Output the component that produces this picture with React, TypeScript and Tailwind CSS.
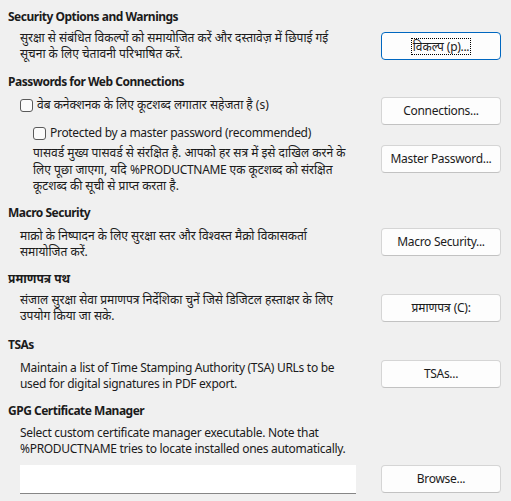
import type { ReactNode } from 'react'

const font = {
  fontFamily:
    '"Noto Sans", "Noto Sans Devanagari", "Open Sans", "Liberation Sans", sans-serif',
}

// Latin runs are tightened a little so they take the width of the original UI font
const latin = 'tracking-[-0.3px]'

function Button({
  children,
  focused = false,
  className = '',
}: {
  children: ReactNode
  focused?: boolean
  className?: string
}) {
  return (
    <button
      className={
        'flex h-[28px] w-[120px] shrink-0 items-center justify-center rounded-[4px] border bg-[#fdfdfd] text-[12px] text-[#1b1b1b] ' +
        (focused
          ? 'border-[#0067c0]'
          : 'border-[#d5d5d5] border-b-[#c2c2c2]') +
        ' ' +
        className
      }
    >
      {focused ? (
        <span className="border border-dotted border-black px-[1px] leading-[15px]">
          {children}
        </span>
      ) : (
        <span>{children}</span>
      )}
    </button>
  )
}

function Heading({ children, className = '' }: { children: ReactNode; className?: string }) {
  return (
    <div
      className={
        'whitespace-nowrap pl-[8px] text-[12px] font-bold leading-[16px] text-[#1b1b1b] ' +
        className
      }
    >
      {children}
    </div>
  )
}

function Checkbox({ label, className = '' }: { label: ReactNode; className?: string }) {
  return (
    <label className={'flex items-center gap-[4px] whitespace-nowrap ' + className}>
      <span className="h-[13px] w-[13px] shrink-0 rounded-[3px] border border-[#5a5a5a] bg-[#fbfbfb]" />
      <span>{label}</span>
    </label>
  )
}

export default function App() {
  return (
    <div
      className="h-[501px] w-[511px] overflow-hidden bg-[#f0f0f0] pr-[10px] text-[12px] leading-[16px] text-[#1b1b1b]"
      style={font}
    >
      {/* Security Options and Warnings */}
      <Heading className={'pt-[9px] tracking-[-0.5px]'}>Security Options and Warnings</Heading>
      <div className="mt-[5px] flex items-start justify-between pl-[20px]">
        <p className="whitespace-nowrap">
          सुरक्षा से संबंधित विकल्पों को समायोजित करें और दस्तावेज़ में छिपाई गई
          <br />
          सूचना के लिए चेतावनी परिभाषित करें.
        </p>
        <Button focused className="mt-[2px]">
          विकल्प <span className={latin}>(p)...</span>
        </Button>
      </div>

      {/* Passwords */}
      <Heading className="mt-[12px] tracking-[-0.5px]">Passwords for Web Connections</Heading>
      <div className="mt-[7px] flex items-start justify-between pl-[20px]">
        <div>
          <Checkbox label="वेब कनेक्शनक के लिए कूटशब्द लगातार सहेजता है (s)" />
          <Checkbox
            label={<span className={latin}>Protected by a master password (recommended)</span>}
            className="ml-[13px] mt-[12px]"
          />
        </div>
        <Button className={latin}>Connections...</Button>
      </div>
      <div className="mt-[4px] flex items-start justify-between pl-[33px]">
        <p className="whitespace-nowrap leading-[16.5px]">
          पासवर्ड मुख्य पासवर्ड से संरक्षित है. आपको हर सत्र में इसे दाखिल करने के
          <br />
          लिए पूछा जाएगा, यदि <span className={latin}>%PRODUCTNAME</span> एक कूटशब्द को
          संरक्षित
          <br />
          कूटशब्द की सूची से प्राप्त करता है.
        </p>
        <Button className={latin}>Master Password...</Button>
      </div>

      {/* Macro Security */}
      <Heading className="mt-[10px] tracking-[-0.5px]">Macro Security</Heading>
      <div className="mt-[7px] flex items-start justify-between pl-[20px]">
        <p className="whitespace-nowrap">
          माक्रो के निष्पादन के लिए सुरक्षा स्तर और विश्वस्त मैक्रो विकासकर्ता
          <br />
          समायोजित करें.
        </p>
        <Button className={latin}>Macro Security...</Button>
      </div>

      {/* Certificate path */}
      <Heading className="mt-[11px]">प्रमाणपत्र पथ</Heading>
      <div className="mt-[5px] flex items-start justify-between pl-[20px]">
        <p className="whitespace-nowrap">
          संजाल सुरक्षा सेवा प्रमाणपत्र निर्देशिका चुनें जिसे डिजिटल हस्ताक्षर के लिए
          <br />
          उपयोग किया जा सके.
        </p>
        <Button className="mt-[2px]">
          प्रमाणपत्र <span className={latin}>(C):</span>
        </Button>
      </div>

      {/* TSAs */}
      <Heading className="mt-[13px] tracking-[-0.5px]">TSAs</Heading>
      <div className="mt-[7px] flex items-start justify-between pl-[20px]">
        <p className={'whitespace-nowrap ' + latin}>
          Maintain a list of Time Stamping Authority (TSA) URLs to be
          <br />
          used for digital signatures in PDF export.
        </p>
        <Button className={latin}>TSAs...</Button>
      </div>

      {/* GPG */}
      <Heading className="mt-[11px] tracking-[-0.5px]">GPG Certificate Manager</Heading>
      <p className={'mt-[6px] whitespace-nowrap pl-[20px] ' + latin}>
        Select custom certificate manager executable. Note that
        <br />
        %PRODUCTNAME tries to locate installed ones automatically.
      </p>
      <div className="mt-[8px] flex items-center justify-between pl-[20px]">
        <input
          className="h-[29px] w-[336px] border-b border-[#868686] bg-white px-[6px] text-[12px] outline-none"
          style={font}
        />
        <Button className={latin}>Browse...</Button>
      </div>
    </div>
  )
}
